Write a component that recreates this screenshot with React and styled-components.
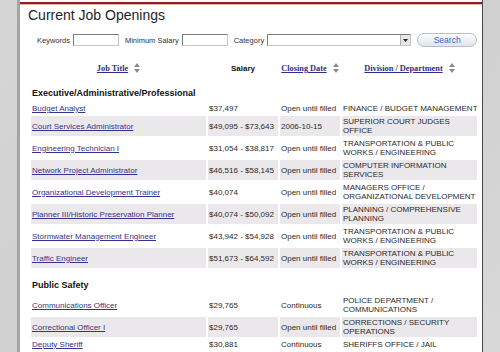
import React from 'react';
import styled, { createGlobalStyle } from 'styled-components';

const GlobalStyle = createGlobalStyle`
	body {
		margin: 0;
		background: #d3d3d3;
		font-family: "Liberation Sans", Arial, sans-serif;
	}
`;

const Page = styled.div`
	display: flex;
	min-height: 352px;
	padding-left: 17px;
	background: linear-gradient(135deg, #d6d6d6 0%, #cfcfcf 50%, #d8d8d8 100%);
`;

const Panel = styled.div`
	width: 462px;
	background: #fff;
	border-left: 3px solid #a4a4a4;
	border-right: 1px solid #4a4a4a;
	padding-top: 2px;
`;

const Rule = styled.div`
	height: 2px;
	background: #a11a1a;
	box-shadow: 0 1px 0 #e2b4b4;
`;

const Content = styled.div`
	padding-left: 8px;
`;

const Title = styled.h1`
	margin: 3px 0 0;
	font-size: 14px;
	line-height: 16px;
	font-weight: normal;
	color: #1e1e1e;
`;

const SearchRow = styled.div`
	display: flex;
	align-items: center;
	height: 14px;
	margin-top: 10px;
	padding-left: 9px;
	font-size: 7.5px;
	color: #333;
`;

const Label = styled.span`
	margin-right: 3px;
`;

const TextInput = styled.div`
	box-sizing: border-box;
	width: 46px;
	height: 12px;
	margin-right: 6px;
	border: 1px solid;
	border-color: #7c7c7c #c8c8c8 #c8c8c8 #7c7c7c;
	background: #fff;
`;

const SelectBox = styled.div`
	box-sizing: border-box;
	display: flex;
	justify-content: flex-end;
	align-items: center;
	width: 144px;
	height: 12px;
	margin-right: 6px;
	border: 1px solid;
	border-color: #7c7c7c #c8c8c8 #c8c8c8 #7c7c7c;
	background: #fff;
`;

const SelectArrow = styled.div`
	display: flex;
	align-items: center;
	justify-content: center;
	width: 9px;
	height: 10px;
	background: #e6e6e6;
	border-left: 1px solid #b0b0b0;
`;

const SearchButton = styled.button`
	box-sizing: border-box;
	display: flex;
	align-items: center;
	justify-content: center;
	width: 60px;
	height: 14px;
	padding: 0;
	border: 1px solid #b6bec8;
	border-radius: 7px;
	background: linear-gradient(#fdfdfe, #dfe5ed);
	color: #3065cc;
	font-family: inherit;
	font-size: 8.5px;
`;

const Table = styled.table`
	width: 450px;
	margin: 11px 0 0 1px;
	border-spacing: 2px;
	table-layout: fixed;
`;

const Col = styled.col`
	width: ${props => props.$w}px;
`;

const HeadCell = styled.th`
	height: 16px;
	padding: 0;
	text-align: center;
	vertical-align: middle;
	font-family: ${props =>
		props.$plain
			? '"Liberation Sans", Arial, sans-serif'
			: '"Liberation Serif", "Times New Roman", serif'};
	font-size: ${props => (props.$plain ? '8px' : '8.3px')};
	font-weight: bold;
	color: #111;
	white-space: nowrap;
`;

const HeadLink = styled.a`
	color: #2e2e85;
	text-decoration: underline;
`;

const SectionCell = styled.td`
	padding: 10px 1px 2px;
	font-size: 9px;
	line-height: 11px;
	font-weight: bold;
	color: #111;
`;

const Cell = styled.td`
	padding: 1px;
	vertical-align: middle;
	font-size: 8px;
	line-height: 9px;
	color: #2a2a2a;
	background: ${props => (props.$shade ? '#ebe8ec' : 'transparent')};
	white-space: nowrap;
	overflow: hidden;
`;

const JobLink = styled.a`
	color: #34348e;
	text-decoration: underline;
`;

const SortArrows = () => (
	<svg width="6" height="10" viewBox="0 0 6 10" style={{ marginLeft: 6, verticalAlign: -2 }}>
		<polygon points="3,0 6,4 0,4" fill="#8a8a8a" />
		<polygon points="0,6 6,6 3,10" fill="#8a8a8a" />
	</svg>
);

const sections = [
	{
		name: 'Executive/Administrative/Professional',
		jobs: [
			['Budget Analyst', '$37,497', 'Open until filled', ['FINANCE / BUDGET MANAGEMENT']],
			['Court Services Administrator', '$49,095 - $73,643', '2006-10-15', ['SUPERIOR COURT JUDGES', 'OFFICE']],
			['Engineering Technician I', '$31,054 - $38,817', 'Open until filled', ['TRANSPORTATION & PUBLIC', 'WORKS / ENGINEERING']],
			['Network Project Administrator', '$46,516 - $58,145', 'Open until filled', ['COMPUTER INFORMATION', 'SERVICES']],
			['Organizational Development Trainer', '$40,074', 'Open until filled', ['MANAGERS OFFICE /', 'ORGANIZATIONAL DEVELOPMENT']],
			['Planner III/Historic Preservation Planner', '$40,074 - $50,092', 'Open until filled', ['PLANNING / COMPREHENSIVE', 'PLANNING']],
			['Stormwater Management Engineer', '$43,942 - $54,928', 'Open until filled', ['TRANSPORTATION & PUBLIC', 'WORKS / ENGINEERING']],
			['Traffic Engineer', '$51,673 - $64,592', 'Open until filled', ['TRANSPORTATION & PUBLIC', 'WORKS / ENGINEERING']],
		],
	},
	{
		name: 'Public Safety',
		jobs: [
			['Communications Officer', '$29,765', 'Continuous', ['POLICE DEPARTMENT /', 'COMMUNICATIONS']],
			['Correctional Officer I', '$29,765', 'Open until filled', ['CORRECTIONS / SECURITY', 'OPERATIONS']],
			['Deputy Sheriff', '$30,881', 'Continuous', ['SHERIFFS OFFICE / JAIL']],
		],
	},
];

export default function App() {
	return (
		<>
			<GlobalStyle />
			<Page>
				<Panel>
					<Rule />
					<Content>
						<Title>Current Job Openings</Title>
						<SearchRow>
							<Label>Keywords</Label>
							<TextInput />
							<Label>Minimum Salary</Label>
							<TextInput />
							<Label>Category</Label>
							<SelectBox>
								<SelectArrow>
									<svg width="5" height="3" viewBox="0 0 5 3">
										<polygon points="0,0 5,0 2.5,3" fill="#222" />
									</svg>
								</SelectArrow>
							</SelectBox>
							<SearchButton>Search</SearchButton>
						</SearchRow>
						<Table>
							<colgroup>
								<Col $w={175} />
								<Col $w={70} />
								<Col $w={60} />
								<Col $w={135} />
							</colgroup>
							<thead>
								<tr>
									<HeadCell>
										<HeadLink>Job Title</HeadLink>
										<SortArrows />
									</HeadCell>
									<HeadCell $plain>Salary</HeadCell>
									<HeadCell>
										<HeadLink>Closing Date</HeadLink>
										<SortArrows />
									</HeadCell>
									<HeadCell>
										<HeadLink>Division / Department</HeadLink>
										<SortArrows />
									</HeadCell>
								</tr>
							</thead>
							{sections.map(section => (
								<tbody key={section.name}>
									<tr>
										<SectionCell colSpan={4}>{section.name}</SectionCell>
									</tr>
									{section.jobs.map((job, i) => (
										<tr key={job[0]}>
											<Cell $shade={i % 2 === 1}>
												<JobLink>{job[0]}</JobLink>
											</Cell>
											<Cell $shade={i % 2 === 1}>{job[1]}</Cell>
											<Cell $shade={i % 2 === 1}>{job[2]}</Cell>
											<Cell $shade={i % 2 === 1}>
												{job[3].map((line, k) => (
													<React.Fragment key={k}>
														{k > 0 && <br />}
														{line}
													</React.Fragment>
												))}
											</Cell>
										</tr>
									))}
								</tbody>
							))}
						</Table>
					</Content>
				</Panel>
			</Page>
		</>
	);
}
